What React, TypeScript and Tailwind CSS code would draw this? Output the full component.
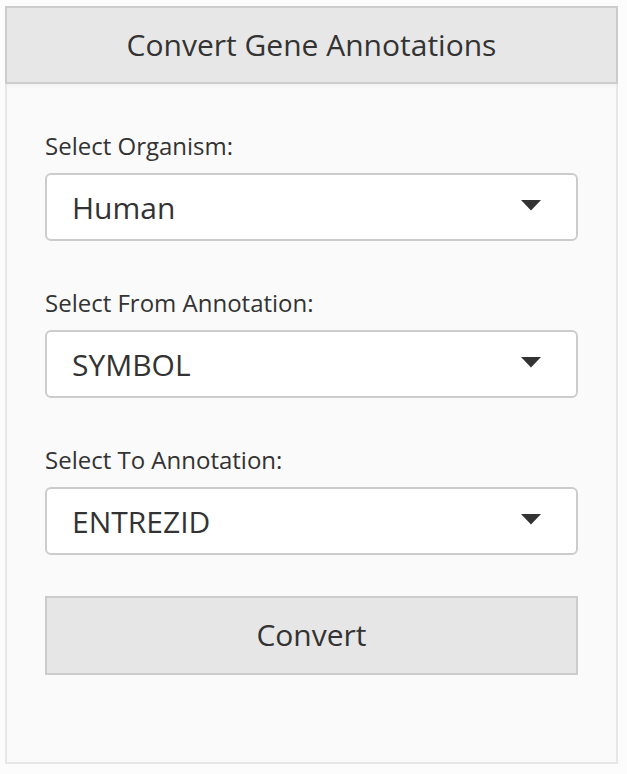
const fields = [
  { label: "Select Organism:", value: "Human" },
  { label: "Select From Annotation:", value: "SYMBOL" },
  { label: "Select To Annotation:", value: "ENTREZID" },
];

function Caret() {
  return (
    <svg width="20" height="11" viewBox="0 0 20 11" className="mb-[3px] shrink-0">
      <path d="M0 0 L20 0 L10 10.5 Z" fill="#333333" />
    </svg>
  );
}

export default function App() {
  return (
    <div
      className="min-h-[774px] bg-[#fcfcfc] pl-[5px] pr-[9px] pt-[6px] pb-[10px] text-[#333333]"
      style={{ fontFamily: '"Open Sans", "Noto Sans", sans-serif' }}
    >
      <div className="flex h-[758px] flex-col">
        <div className="flex h-[78px] items-center justify-center border-2 border-[#cccccc] bg-[#e7e7e7] pb-[2px] text-[30px]">
          Convert Gene Annotations
        </div>
        <div className="flex-1 border-2 border-t-0 border-[#e7e7e7] bg-[#fafafa] px-[38px] pt-[46px] shadow-[inset_0_4px_4px_-2px_rgba(0,0,0,0.04)]">
          <div className="flex flex-col gap-[46px]">
            {fields.map((f) => (
              <div key={f.label}>
                <div className="mb-[11px] text-[24px] leading-[32px]">{f.label}</div>
                <div className="flex h-[68px] items-center justify-between rounded-[6px] border-2 border-[#cccccc] bg-white pl-[25px] pr-[35px] text-[30px]">
                  <span>{f.value}</span>
                  <Caret />
                </div>
              </div>
            ))}
          </div>
          <button className="mt-[41px] flex h-[79px] w-full items-center justify-center border-2 border-[#cccccc] bg-[#e6e6e6] pb-[2px] text-[30px] text-[#333333]">
            Convert
          </button>
        </div>
      </div>
    </div>
  );
}
